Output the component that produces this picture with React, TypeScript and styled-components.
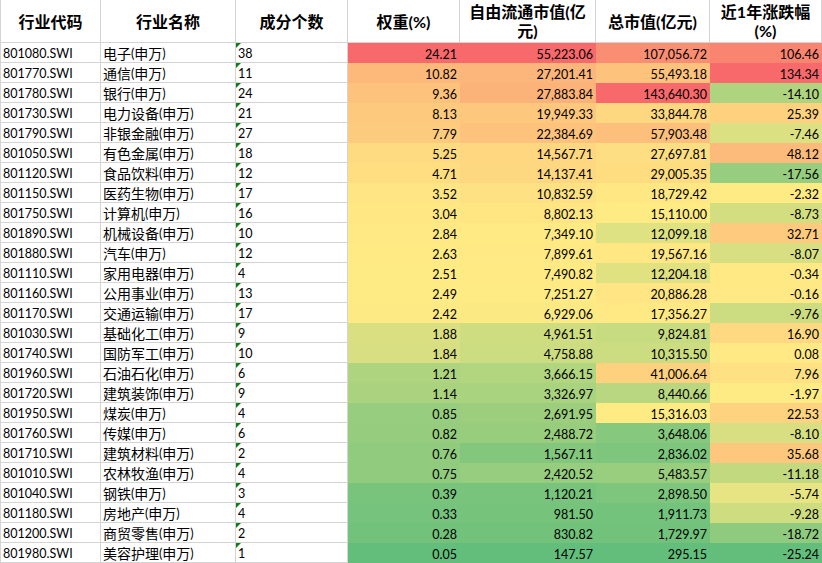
import { Fragment } from 'react'
import styled, { createGlobalStyle } from 'styled-components'

const GlobalStyle = createGlobalStyle`
  html, body {
    margin: 0;
    padding: 0;
    background: #ffffff;
  }
`

type Row = [string, string, string, number, number, number, number]

const rows: Row[] = [
  ['801080.SWI', '电子(申万)', '38', 24.21, 55223.06, 107056.72, 106.46],
  ['801770.SWI', '通信(申万)', '11', 10.82, 27201.41, 55493.18, 134.34],
  ['801780.SWI', '银行(申万)', '24', 9.36, 27883.84, 143640.3, -14.1],
  ['801730.SWI', '电力设备(申万)', '21', 8.13, 19949.33, 33844.78, 25.39],
  ['801790.SWI', '非银金融(申万)', '27', 7.79, 22384.69, 57903.48, -7.46],
  ['801050.SWI', '有色金属(申万)', '18', 5.25, 14567.71, 27697.81, 48.12],
  ['801120.SWI', '食品饮料(申万)', '12', 4.71, 14137.41, 29005.35, -17.56],
  ['801150.SWI', '医药生物(申万)', '17', 3.52, 10832.59, 18729.42, -2.32],
  ['801750.SWI', '计算机(申万)', '16', 3.04, 8802.13, 15110.0, -8.73],
  ['801890.SWI', '机械设备(申万)', '10', 2.84, 7349.1, 12099.18, 32.71],
  ['801880.SWI', '汽车(申万)', '12', 2.63, 7899.61, 19567.16, -8.07],
  ['801110.SWI', '家用电器(申万)', '4', 2.51, 7490.82, 12204.18, -0.34],
  ['801160.SWI', '公用事业(申万)', '13', 2.49, 7251.27, 20886.28, -0.16],
  ['801170.SWI', '交通运输(申万)', '17', 2.42, 6929.06, 17356.27, -9.76],
  ['801030.SWI', '基础化工(申万)', '9', 1.88, 4961.51, 9824.81, 16.9],
  ['801740.SWI', '国防军工(申万)', '10', 1.84, 4758.88, 10315.5, 0.08],
  ['801960.SWI', '石油石化(申万)', '6', 1.21, 3666.15, 41006.64, 7.96],
  ['801720.SWI', '建筑装饰(申万)', '9', 1.14, 3326.97, 8440.66, -1.97],
  ['801950.SWI', '煤炭(申万)', '4', 0.85, 2691.95, 15316.03, 22.53],
  ['801760.SWI', '传媒(申万)', '6', 0.82, 2488.72, 3648.06, -8.1],
  ['801710.SWI', '建筑材料(申万)', '2', 0.76, 1567.11, 2836.02, 35.68],
  ['801010.SWI', '农林牧渔(申万)', '4', 0.75, 2420.52, 5483.57, -11.18],
  ['801040.SWI', '钢铁(申万)', '3', 0.39, 1120.21, 2898.5, -5.74],
  ['801180.SWI', '房地产(申万)', '4', 0.33, 981.5, 1911.73, -9.28],
  ['801200.SWI', '商贸零售(申万)', '2', 0.28, 830.82, 1729.97, -18.72],
  ['801980.SWI', '美容护理(申万)', '1', 0.05, 147.57, 295.15, -25.24],
]

const headers = ['行业代码', '行业名称', '成分个数', '权重(%)', '自由流通市值(亿元)', '总市值(亿元)', '近1年涨跌幅(%)']

// excel 3-colour scale: green (min) -> yellow (50th percentile) -> red (max)
const GREEN = [0x63, 0xbe, 0x7b]
const YELLOW = [0xff, 0xeb, 0x84]
const RED = [0xf8, 0x69, 0x6b]

const mix = (a: number[], b: number[], t: number) =>
  'rgb(' + a.map((v, i) => Math.round(v + (b[i] - v) * t)).join(',') + ')'

const scaleFor = (values: number[]) => {
  const sorted = [...values].sort((a, b) => a - b)
  const n = sorted.length
  const mid = n % 2 ? sorted[(n - 1) / 2] : (sorted[n / 2 - 1] + sorted[n / 2]) / 2
  const min = sorted[0]
  const max = sorted[n - 1]
  return (v: number) =>
    v <= mid ? mix(GREEN, YELLOW, (v - min) / (mid - min)) : mix(YELLOW, RED, (v - mid) / (max - mid))
}

const scales = [3, 4, 5, 6].map((c) => scaleFor(rows.map((r) => r[c] as number)))

const fmt = (v: number) => v.toLocaleString('en-US', { minimumFractionDigits: 2, maximumFractionDigits: 2 })

const Sheet = styled.div`
  display: grid;
  grid-template-columns: 101px 135px 112px 112px 136px 114px 112px;
  grid-template-rows: 43px;
  grid-auto-rows: 20px;
  width: 822px;
  font-family: 'Lato', 'Noto Sans CJK SC', sans-serif;
  color: #000000;
`

const HeaderCell = styled.div<{ $first?: boolean }>`
  box-sizing: border-box;
  display: flex;
  align-items: center;
  justify-content: center;
  padding: 0 2px;
  border-right: 1px solid #d4d4d4;
  border-bottom: 1px solid #d4d4d4;
  border-left: ${(p) => (p.$first ? '1px solid #d4d4d4' : 'none')};
  font-family: 'Lato', 'Noto Sans CJK SC', sans-serif;
  font-weight: 700;
  font-size: 16px;
  line-height: 19px;
  text-align: center;
`

const Cell = styled.div<{ $first?: boolean; $flag?: boolean }>`
  position: relative;
  box-sizing: border-box;
  display: flex;
  align-items: flex-end;
  padding: 0 2px 1px 2px;
  border-right: 1px solid #d4d4d4;
  border-bottom: 1px solid #d4d4d4;
  border-left: ${(p) => (p.$first ? '1px solid #d4d4d4' : 'none')};
  font-size: 12.5px;
  line-height: 15px;
  white-space: nowrap;
  overflow: hidden;

  &::before {
    content: '';
    display: ${(p) => (p.$flag ? 'block' : 'none')};
    position: absolute;
    top: 0;
    left: 0;
    border-top: 5px solid #117d17;
    border-right: 5px solid transparent;
  }
`

const HeatCell = styled.div<{ $bg: string }>`
  box-sizing: border-box;
  display: flex;
  align-items: flex-end;
  justify-content: flex-end;
  padding: 0 3px 1px 2px;
  background: ${(p) => p.$bg};
  font-size: 12.5px;
  line-height: 15px;
  white-space: nowrap;
`

const Han = styled.span`
  font-family: 'Noto Sans CJK SC', sans-serif;
  font-size: 14px;
`

const renderName = (name: string) =>
  name.split(/([\u4e00-\u9fff]+)/).map((part, i) =>
    /[\u4e00-\u9fff]/.test(part) ? <Han key={i}>{part}</Han> : <Fragment key={i}>{part}</Fragment>
  )

export default function App() {
  return (
    <>
      <GlobalStyle />
      <Sheet>
        {headers.map((h, i) => (
          <HeaderCell key={h} $first={i === 0}>
            {h}
          </HeaderCell>
        ))}
        {rows.map((r) => (
          <Fragment key={r[0]}>
            <Cell $first>{r[0]}</Cell>
            <Cell>{renderName(r[1])}</Cell>
            <Cell $flag>{r[2]}</Cell>
            {scales.map((scale, i) => {
              const v = r[3 + i] as number
              return (
                <HeatCell key={i} $bg={scale(v)}>
                  {fmt(v)}
                </HeatCell>
              )
            })}
          </Fragment>
        ))}
      </Sheet>
    </>
  )
}
